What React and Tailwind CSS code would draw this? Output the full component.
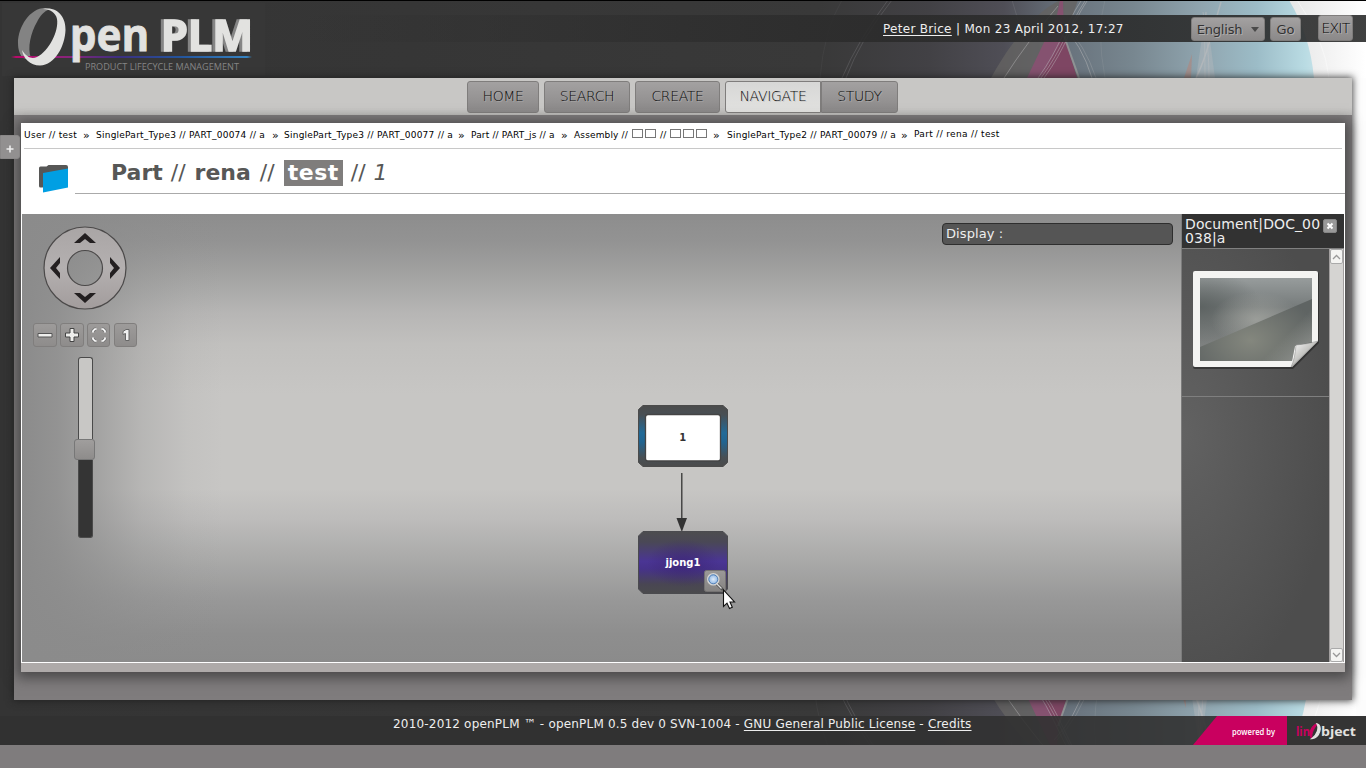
import React from "react";

const SANS = "font-['DejaVu_Sans',sans-serif]";
const BUTTON =
  "flex items-center justify-center rounded-[3px] border border-[#7f7d7c] bg-gradient-to-b from-[#a3a1a1] to-[#8b8989] text-[#333] [text-shadow:1px_1px_0_#b0aeae]";

function Backdrop() {
  return (
    <svg className="absolute left-0 top-0" width="1366" height="745" viewBox="0 0 1366 745" aria-hidden="true">
      <defs>
        <linearGradient id="sky" gradientUnits="userSpaceOnUse" x1="0" y1="0" x2="1366" y2="0">
          <stop offset="0" stopColor="#343434" />
          <stop offset="0.3" stopColor="#363636" />
          <stop offset="0.6" stopColor="#393939" />
          <stop offset="0.68" stopColor="#424145" />
          <stop offset="0.735" stopColor="#4f4e56" />
          <stop offset="0.78" stopColor="#68727c" />
          <stop offset="0.83" stopColor="#788790" />
          <stop offset="0.88" stopColor="#90a5af" />
          <stop offset="0.92" stopColor="#9cbcc7" />
          <stop offset="0.955" stopColor="#b9dbe3" />
          <stop offset="0.98" stopColor="#dceff3" />
        </linearGradient>
        <linearGradient id="edge" x1="0" y1="0" x2="1" y2="0">
          <stop offset="0" stopColor="#e6e6e6" />
          <stop offset="1" stopColor="#ffffff" />
        </linearGradient>
        <g id="shapes">
          <path d="M991 78 C1005 52 1030 15 1060 0 L1078 0 L1064 40 L1078 78Z" fill="#646362" opacity=".8" />
          <path d="M1027 78 L1057 15 L1060 0 H1063 L1064 40 L1077 78Z" fill="#855270" />
          <path d="M1041 78 L1064 36 L1077 78Z" fill="#7e4663" />
          <path d="M1064 36 L1079 78" stroke="#a0a09e" strokeWidth="2" opacity=".7" />
          <path d="M1196 78 L1206 10 L1215 78Z" fill="#b4b9bc" opacity=".45" />
          <path d="M1184 78 L1192 54 L1191 78Z" fill="#a78c87" opacity=".8" />
          <path d="M1289 0 Q1310 35 1314 78 L1366 78 L1366 0Z" fill="url(#edge)" />
          <g fill="none" stroke="#c0bfc0" strokeWidth=".8" opacity=".55">
            <path d="M1004 78 Q1027 42 1058 6" />
            <path d="M1038 78 C1060 48 1065 25 1081 1" />
            <path d="M1041 78 C1063 48 1069 25 1085 1" />
            <path d="M1044 78 C1066 48 1071 25 1087 1" />
            <path d="M1060 22 Q1082 45 1092 78" />
            <path d="M1063 22 Q1085 45 1096 78" opacity=".6" />
            <path d="M1221 2 C1210 40 1205 60 1196 78" strokeWidth="1.500" />
            <path d="M1203 12 C1207 35 1209 58 1209 78" />
            <path d="M1206 12 C1204 35 1205 58 1205 78" />
            <path d="M1297 0 Q1325 40 1329 78" stroke="#fff" />
            <path d="M1012 0 L1018 20" opacity=".3" />
            <path d="M1105 0 Q1096 30 1105 78" opacity=".3" />
          </g>
          <g fill="none" stroke="#77767a" opacity=".4">
            <path d="M842 78 Q858 40 888 0" />
            <path d="M846 78 Q860 40 892 0" />
            <path d="M820 78 Q824 30 842 0" opacity=".3" />
          </g>
        </g>
        <clipPath id="lower"><rect y="700" width="1366" height="45" /></clipPath>
      </defs>
      <rect width="1366" height="745" fill="url(#sky)" />
      <use href="#shapes" />
      <rect x="1352" y="78" width="14" height="630" fill="#fdfdfd" />
      <g clipPath="url(#lower)">
        <g transform="translate(-6 762) scale(1 -1)">
          <use href="#shapes" />
        </g>
        <rect x="1356" y="700" width="10" height="16" fill="#fcfcfc" />
      </g>
      <rect width="1366" height="1" fill="#000" />
    </svg>
  );
}

function Logo() {
  return (
    <svg width="265" height="76" viewBox="0 0 265 76" className="block shrink-0">
      <defs>
        <linearGradient id="beam" x1="0" y1="0" x2="1" y2="0">
          <stop offset="0" stopColor="#c1086a" />
          <stop offset=".25" stopColor="#86257c" />
          <stop offset=".45" stopColor="#3b2f80" />
          <stop offset=".7" stopColor="#23549c" />
          <stop offset="1" stopColor="#3887c4" />
        </linearGradient>
      </defs>
      <rect x="2" y="3" width="263" height="73" fill="#373737" />
      <path d="M45 8 C30 8 18 27 18 43 C18 50 20 55 23 58 C26 59 29 59 31 58 C27 48 31 32 37 22 C40 16 44 11 50 9Z" fill="#838383" />
      <path d="M11 57L16 56H247L252 57L247 58H16Z" fill="url(#beam)" />
      <path d="M43 9 C58 6 66 18 65.500 30 C65 46 55 65 40 65.500 C30 65.500 23 58 22 50 C27 58 32 59 37 57 C49 51 59 31 57 19 C56 13 50 9 43 9Z" fill="#e2e2e0" />
      <g fontFamily="Noto Sans, Open Sans, sans-serif" fontWeight="700" fill="#e2e2e0" stroke="#e2e2e0">
        <text x="70" y="51" fontSize="45" textLength="79" lengthAdjust="spacingAndGlyphs" strokeWidth=".8">pen</text>
        <text className="drop-shadow-[-3px_0_0_#858585]" x="161" y="50.500" fontSize="43" textLength="92" lengthAdjust="spacingAndGlyphs" strokeWidth="1.600">PLM</text>
      </g>
      <text x="85" y="69.500" fontFamily="Open Sans, sans-serif" fontSize="9.500" textLength="154" lengthAdjust="spacingAndGlyphs" fill="#858585">PRODUCT LIFECYCLE MANAGEMENT</text>
    </svg>
  );
}

function Header() {
  return (
    <header className="relative flex h-[78px] shrink-0 items-start pt-[15px]">
      <div className="flex h-[27px] w-full items-start bg-[linear-gradient(90deg,#2c2c2c00_22%,#2e2e2ecc_50%,#2b2b2be6_65%,#2b2c2ce6)]">
        <div className="-mt-[15px] flex h-[27px] w-[883px] shrink-0 items-start">
          <Logo />
        </div>
        <p className="w-[308px] shrink-0 whitespace-nowrap pt-px text-[12px] leading-[27px] tracking-[0.3px] text-[#eee]">
          <a className="underline underline-offset-2">Peter Brice</a> | Mon 23 April 2012, 17:27
        </p>
        <div className={BUTTON + " mt-[2px] h-[24px] w-[74px] shrink-0 gap-[9px] pt-px text-[13px] tracking-[-0.2px]"}>
          English
          <svg width="8" height="5" viewBox="0 0 8 5"><path d="M0 0H8L4 5Z" fill="#4a4a4a" /></svg>
        </div>
        <div className={BUTTON + " ml-[5px] mt-[2px] h-[24px] w-[31px] shrink-0 pt-px text-[13px]"}>Go</div>
        <div className={BUTTON + " ml-[17px] h-[26px] w-[35px] shrink-0 text-[14px] tracking-[-0.8px] font-extralight text-black"}>EXIT</div>
      </div>
    </header>
  );
}

function Menu() {
  const tab = "flex items-center justify-center rounded-[3px] border border-[#7f7d7c] bg-gradient-to-b from-[#a3a1a1] to-[#8b8989] text-[#0c0c0c] [text-shadow:1px_1px_0_#aaa8a8] h-[32px] text-[14px] pb-px font-extralight tracking-[-0.35px]";
  return (
    <nav className="flex h-[37px] shrink-0 bg-[linear-gradient(#c8c7c5_80%,#bcbbb9)] pl-[453px] pt-[3px]">
      <a className={tab + " w-[72px]"}>HOME</a>
      <a className={tab + " ml-[5px] w-[86px]"}>SEARCH</a>
      <a className={tab + " ml-[5px] w-[85px]"}>CREATE</a>
      <a className="ml-[5px] flex h-[32px] w-[96px] items-center justify-center rounded-l-[3px] border border-[#7f7d7c] bg-gradient-to-b from-[#d7d7d6] to-[#e2e2e0] pb-px text-[14px] font-extralight tracking-[-0.3px] text-[#0c0c0c] [text-shadow:1px_1px_0_#c8c8c8]">NAVIGATE</a>
      <a className={tab + " w-[77px] rounded-l-none"}>STUDY</a>
    </nav>
  );
}

const Tofu = () => <span className="mr-[2px] inline-block h-[9px] w-[11px] border border-[#777]" />;

function Crumbs() {
  const sep = "shrink-0 text-[11px]";
  return (
    <div className="mx-[3px] flex h-[26px] shrink-0 whitespace-nowrap border-b border-[#c8c8c8] pt-px text-[9px] leading-[23px] tracking-[0.24px] text-black">
      <span className="w-[59px] shrink-0 tracking-[0.3px]">User // test</span>
      <span className={sep + " w-[13px]"}>»</span>
      <span className="w-[176px] shrink-0">SinglePart_Type3 // PART_00074 // a</span>
      <span className={sep + " w-[12px]"}>»</span>
      <span className="w-[174px] shrink-0">SinglePart_Type3 // PART_00077 // a</span>
      <span className={sep + " w-[13px]"}>»</span>
      <span className="w-[90px] shrink-0 tracking-[0.15px]">Part // PART_js // a</span>
      <span className={sep + " w-[13px]"}>»</span>
      <span className="flex w-[139px] shrink-0">
        <span className="w-[58px] tracking-[0.15px]">Assembly //</span>
        <span className="flex w-[28px] pt-[5px]"><Tofu /><Tofu /></span>
        <span className="w-[10px]">//</span>
        <span className="flex pt-[5px]"><Tofu /><Tofu /><Tofu /></span>
      </span>
      <span className={sep + " w-[14px]"}>»</span>
      <span className="w-[174px] shrink-0">SinglePart_Type2 // PART_00079 // a</span>
      <span className={sep + " w-[13px]"}>»</span>
      <span className="leading-[21px] tracking-[0.34px]">Part // rena // test</span>
    </div>
  );
}

function Title() {
  return (
    <div className="flex h-[65px] shrink-0">
      <svg className="ml-[17px] mt-[15px] shrink-0" width="32" height="30" viewBox="0 0 32 30">
        <path d="M1 4Q1 2.500 2.500 2.500H8.500L10.500 1H28Q30 1 30 3V20L4 23.500H2.500Q1 23.500 1 22Z" fill="#575756" />
        <path d="M5 9L30 4.500V23.500L5 28.500Z" fill="#009fe3" />
      </svg>
      <div className="ml-[5px] flex h-[45px] grow border-b border-[#aaa]">
        <h1 className="ml-[36px] flex items-start whitespace-nowrap pt-[11px] text-[22px] leading-[26px] text-[#575756]">
          <span className="font-bold">Part</span><span className="ml-[8px]">//</span>
          <span className="ml-[9px] font-bold">rena</span><span className="ml-[9px]">//</span>
          <span className="ml-[9px] bg-[#7f7d7c] px-[4px] font-bold tracking-[0.5px] text-white">test</span>
          <span className="ml-[8px]">//</span><span className="ml-[8px] italic">1</span>
        </h1>
      </div>
    </div>
  );
}

const TOOL = "flex h-[24px] items-center justify-center rounded-[3px] border border-[#807e7d] bg-gradient-to-b from-[#9d9b9a] to-[#8e8c8b]";

function Controls() {
  return (
    <div className="flex w-[120px] shrink-0 flex-col pt-[12px]">
      <svg className="ml-[21px]" width="84" height="84" viewBox="0 0 84 84">
        <defs>
          <linearGradient id="ring" x1="0" y1="0" x2="0" y2="1">
            <stop offset="0" stopColor="#a9a5a5" />
            <stop offset=".5" stopColor="#b4b0b0" />
            <stop offset="1" stopColor="#a29c9c" />
          </linearGradient>
        </defs>
        <path fillRule="evenodd" d="M42 1a41 41 0 1 0 0 82a41 41 0 1 0 0-82zM42 24.500a17.500 17.500 0 1 1 0 35a17.500 17.500 0 1 1 0-35z" fill="url(#ring)" stroke="#4b4949" strokeWidth="1.200" />
        <g fill="#231f20">
          <path d="M42 7L53 17H47L42 13L37 17H31Z" />
          <path d="M42 77L53 67H47L42 71L37 67H31Z" />
          <path d="M7 42L17 31V37L13 42L17 47V53Z" />
          <path d="M77 42L67 31V37L71 42L67 47V53Z" />
        </g>
      </svg>
      <div className="ml-[11px] mt-[13px] flex gap-[3px]">
        <div className={TOOL + " w-[24px]"}>
          <svg width="18" height="18" viewBox="0 0 18 18"><path d="M2 7.500h14v3.500H2z" fill="#eeeeec" stroke="#555" /></svg>
        </div>
        <div className={TOOL + " w-[24px]"}>
          <svg width="18" height="18" viewBox="0 0 18 18"><path d="M7 2.500h4v4.500h4.500v4H11v4.500H7V11H2.500V7H7z" fill="#eeeeec" stroke="#444" /></svg>
        </div>
        <div className={TOOL + " w-[23px]"}>
          <svg width="18" height="18" viewBox="0 0 18 18" fill="none">
            <g stroke="#777" strokeWidth="3.200"><path d="M3 6V5L5 3H6M12 3H13L15 5V6M15 12V13L13 15H12M6 15H5L3 13V12" /></g>
            <g stroke="#fff" strokeWidth="1.700"><path d="M3 6.500V5L5 3H6.500M11.500 3H13L15 5V6.500M15 11.500V13L13 15H11.500M6.500 15H5L3 13V11.500" /></g>
          </svg>
        </div>
        <div className={TOOL + " ml-px w-[23px]"}>
          <svg width="18" height="18" viewBox="0 0 18 18"><path d="M6 5.500L9 3.500H12V14.500H8.500V7.500L6 8.500Z" fill="#f0f0f0" stroke="#666" /></svg>
        </div>
      </div>
      <div className="ml-[52px] mt-[10px] flex w-[22px] flex-col items-end">
        <div className="mr-[3px] h-[82px] w-[15px] rounded-t-[3px] border border-b-0 border-[#4a4a4a] bg-[#c8c7c5]" />
        <div className="mr-px h-[21px] w-[21px] rounded-[3px] border border-[#777] bg-gradient-to-b from-[#a09e9d] to-[#8e8c8b]" />
        <div className="mr-[3px] h-[78px] w-[15px] rounded-b-[3px] border border-t-0 border-[#4a4a4a] bg-[#343434]" />
      </div>
    </div>
  );
}

function Graph() {
  return (
    <svg className="absolute left-[610px] top-[186px]" width="110" height="214" viewBox="632 400 110 214">
      <defs>
        <linearGradient id="blueV" x1="0" y1="0" x2="0" y2="1">
          <stop offset="0" stopColor="#4b4b4b" /><stop offset=".15" stopColor="#484f54" /><stop offset=".45" stopColor="#216a98" /><stop offset=".6" stopColor="#216490" /><stop offset=".85" stopColor="#484f54" /><stop offset="1" stopColor="#4b4b4b" />
        </linearGradient>
        <linearGradient id="violetV" x1="0" y1="0" x2="0" y2="1">
          <stop offset="0" stopColor="#4d4d4f" /><stop offset=".17" stopColor="#4a4856" /><stop offset=".48" stopColor="#4a3594" /><stop offset=".6" stopColor="#46328a" /><stop offset=".85" stopColor="#494653" /><stop offset="1" stopColor="#4b4b4d" />
        </linearGradient>
        <radialGradient id="violetC"><stop offset="0" stopColor="#38206f" stopOpacity=".6" /><stop offset="1" stopColor="#38206f" stopOpacity="0" /></radialGradient>
        <linearGradient id="zoomBtn" x1="0" y1="0" x2="0" y2="1"><stop offset="0" stopColor="#9b9998" /><stop offset="1" stopColor="#858382" /></linearGradient>
        <radialGradient id="lens"><stop offset="0" stopColor="#e0ecfa" /><stop offset="1" stopColor="#82aee0" /></radialGradient>
      </defs>
      <path d="M643 405.500H723L727.500 409.500V462.500L723 466.500H643L638.500 462.500V409.500Z" fill="url(#blueV)" stroke="#4b4b4b" strokeLinejoin="round" />
      <rect x="645.500" y="414.500" width="75" height="46.500" rx="2.500" fill="#fff" stroke="#444" strokeWidth="1.300" />
      <text x="682.800" y="441" textAnchor="middle" fontFamily="DejaVu Sans, sans-serif" fontWeight="700" fontSize="10" fill="#333">1</text>
      <path d="M681.800 473V519" stroke="#333" strokeWidth="1.300" />
      <path d="M676.500 518H687L681.800 532Z" fill="#333" />
      <path d="M643 531.500H723L727.500 536V589L723 593.500H643L638.500 589V536Z" fill="url(#violetV)" stroke="#4b4b4f" strokeLinejoin="round" />
      <ellipse cx="683" cy="563" rx="36" ry="24" fill="url(#violetC)" />
      <text x="683" y="566" textAnchor="middle" fontFamily="DejaVu Sans, sans-serif" fontWeight="700" fontSize="10" fill="#fff">jjong1</text>
      <rect x="704.500" y="570.500" width="21" height="21" rx="2" fill="url(#zoomBtn)" stroke="#757373" />
      <path d="M717 584L722 589" stroke="#555" strokeWidth="3" strokeLinecap="round" />
      <path d="M717 584L721.500 588.500" stroke="#ddd" strokeWidth="1.200" />
      <circle cx="713.300" cy="579.300" r="5.500" fill="url(#lens)" stroke="#d4d4d4" strokeWidth="1.600" />
      <circle cx="713.300" cy="579.300" r="4.500" fill="none" stroke="#4878b0" strokeWidth=".9" />
      <path d="M723.500 590V606.500L727 603.200L729.500 608.500L732.300 607.200L730 602H734.500Z" fill="#fff" stroke="#111" strokeWidth="1.100" />
    </svg>
  );
}

function DocumentPanel() {
  return (
    <aside className="flex h-[448px] w-[163px] shrink-0 flex-col border-l border-[#7c7c7c] bg-[#525252]">
      <div className="flex h-[35px] shrink-0 border-b border-[#808080] bg-[#323232] pl-[3px] text-[14px] leading-[14px] text-[#eee]">
        <p className="w-[138px] shrink-0 pt-[3px] tracking-[0.1px]">Document|DOC_00<br />038|a</p>
        <div className="mt-[5px] flex h-[14px] w-[14px] items-center justify-center rounded-[2px] border border-[#858585] bg-[#999]">
          <svg width="8" height="8" viewBox="0 0 8 8"><path d="M1.500 1.500L6.500 6.500M6.500 1.500L1.500 6.500" stroke="#fff" strokeWidth="2" /></svg>
        </div>
      </div>
      <div className="flex grow">
        <div className="flex w-[147px] flex-col bg-[radial-gradient(ellipse_150px_270px_at_0%_45%,#626262,#4d4d4d)]">
          <div className="flex h-[148px] border-b border-[#7f7f7f] pl-[9px] pt-[19px]">
            <svg width="130" height="104" viewBox="0 0 130 104">
              <defs>
                <radialGradient id="glow" cx=".45" cy=".75" r=".6"><stop offset="0" stopColor="#84877e" /><stop offset="1" stopColor="#5f6463" /></radialGradient>
                <linearGradient id="pic" x1="0" y1="0" x2="0" y2="1">
                  <stop offset="0" stopColor="#979c9c" /><stop offset=".42" stopColor="#767b7b" /><stop offset=".55" stopColor="#7c807f" /><stop offset="1" stopColor="#7e8180" />
                </linearGradient>
                <radialGradient id="shade" cx="0" cy=".42" r=".55"><stop offset="0" stopColor="#575d5c" stopOpacity=".8" /><stop offset="1" stopColor="#575d5c" stopOpacity="0" /></radialGradient>
                <radialGradient id="shine" cx=".5" cy=".6" r=".4"><stop offset="0" stopColor="#a5a7a2" stopOpacity=".75" /><stop offset="1" stopColor="#a5a7a2" stopOpacity="0" /></radialGradient>
                <linearGradient id="fold" x1="1" y1="1" x2=".5" y2=".5"><stop offset="0" stopColor="#b4b6b1" stopOpacity=".7" /><stop offset="1" stopColor="#a8aaa5" stopOpacity="0" /></linearGradient>
                <linearGradient id="curl" x1="0" y1="0" x2="1" y2="1"><stop offset="0" stopColor="#fff" /><stop offset=".6" stopColor="#b4b4b0" /><stop offset="1" stopColor="#eee" /></linearGradient>
              </defs>
              <path d="M4 4H126Q128 4 128 6V75L102 101H4Q2 101 2 99V6Q2 4 4 4Z" fill="#222" opacity=".6" />
              <path d="M4 3H125Q127 3 127 5V73L101 99H4Q2 99 2 97V5Q2 3 4 3Z" fill="#f4f4f2" />
              <path d="M9 10H121V75L104 78L101 93H9Z" fill="url(#glow)" />
              <path d="M9 10H121V31L9 79Z" fill="url(#pic)" />
              <path d="M9 10H121V31L9 79Z" fill="url(#shade)" />
              <path d="M9 10H121V31L9 79Z" fill="url(#shine)" />
              <path d="M121 40V74L104 78L101 93H70Z" fill="url(#fold)" />
              <path d="M127 73Q118 76 105 77Q104 91 100 99Z" fill="url(#curl)" stroke="#888" strokeWidth=".5" />
            </svg>
          </div>
        </div>
        <div className="flex w-[15px] flex-col justify-between border-x border-[#a29f9f] bg-[#d5d4d2]">
          <div className="flex h-[15px] items-center justify-center rounded-[2px] border border-[#aaa] bg-[#f4f4f2]">
            <svg width="9" height="6" viewBox="0 0 9 6"><path d="M1 5L4.500 1.500L8 5" fill="none" stroke="#999" strokeWidth="1.300" /></svg>
          </div>
          <div className="flex h-[14px] items-center justify-center rounded-[2px] border border-[#aaa] bg-[#f4f4f2]">
            <svg width="9" height="6" viewBox="0 0 9 6"><path d="M1 1L4.500 4.500L8 1" fill="none" stroke="#999" strokeWidth="1.300" /></svg>
          </div>
        </div>
      </div>
    </aside>
  );
}

function Footer() {
  return (
    <footer className="relative mt-[16px] flex h-[29px] shrink-0 bg-[#313131]/90 text-[#eee]">
      <p className="w-[793px] shrink-0 whitespace-nowrap pl-[393px] text-[12px] leading-[16px] tracking-[0.19px]">
        2010-2012 openPLM ™ - openPLM 0.5 dev 0 SVN-1004 - <a className="underline underline-offset-2">GNU General Public License</a> - <a className="underline underline-offset-2">Credits</a>
      </p>
      <svg className="ml-auto shrink-0" width="175" height="29" viewBox="0 0 175 29">
        <path d="M26 0H96V29H2Z" fill="#c9005f" />
        <rect x="96" width="79" height="29" fill="#343434" />
        <g fontFamily="Open Sans, Noto Sans, sans-serif">
          <text x="41" y="19" fontSize="9" fontWeight="600" textLength="43" lengthAdjust="spacingAndGlyphs" fill="#fff">powered by</text>
          <text x="105" y="20" fontSize="13" fontWeight="700" textLength="14" lengthAdjust="spacingAndGlyphs" fill="#c9005f">lin</text>
          <text x="130" y="20" fontSize="13" fontWeight="700" textLength="35" lengthAdjust="spacingAndGlyphs" fill="#e2e2e0">bject</text>
        </g>
        <path d="M127 8C121 7 116 19 121 22.500C120 18 123 11 127 8Z" fill="#c9005f" stroke="#c9005f" />
        <path d="M126 8C132 9 129 22 121 22.500C126 19 128.500 12 126 8Z" fill="#e2e2e0" stroke="#e2e2e0" strokeWidth="1.300" />
      </svg>
    </footer>
  );
}

export default function App() {
  return (
    <div className={SANS + " relative flex h-[768px] w-[1366px] flex-col overflow-hidden bg-[#7f7c7d]"}>
      <Backdrop />
      <Header />
      <main className="relative mx-[14px] flex h-[622px] shrink-0 flex-col bg-[#7f7c7d] shadow-[0_0_7px_1px_rgba(30,30,30,0.8)]">
        <Menu />
        <section className="ml-[7px] mt-[8px] flex h-[549px] w-[1324px] shrink-0 flex-col bg-white shadow-[0_2px_12px_4px_rgba(50,50,50,0.7)]">
          <Crumbs />
          <Title />
          <div className="relative ml-px flex h-[448px] w-[1322px] shrink-0 justify-between bg-[linear-gradient(90deg,#8b8b8b_0px,#8b8b8bdd_35px,#8b8b8b99_75px,#8b8b8b44_120px,#8b8b8b11_165px,#8b8b8b00_200px),linear-gradient(#8d8d8d_0px,#939393_28px,#a2a2a1_60px,#b7b6b5_100px,#c1c0be_130px,#c7c6c4_180px,#c7c6c4_275px,#bdbcbb_305px,#aaaaa9_345px,#989898_385px,#8e8e8e_420px,#8b8b8b_448px)]">
            <Controls />
            <Graph />
            <div className="flex">
              <div className="mr-[8px] mt-[9px] h-[22px] w-[231px] rounded-[4px] border border-[#2e2e2e] bg-[#555] pl-[3px] text-[13px] leading-[20px] tracking-[0.1px] text-[#eee]">Display :</div>
              <DocumentPanel />
            </div>
          </div>
          <div className="mt-px h-[9px] shrink-0 bg-[#aeaaa9]" />
        </section>
        <button className="absolute left-[-14px] top-[57px] flex h-[24px] w-[20px] items-center justify-center rounded-r-[3px] border border-[#8a8888] bg-[#929090]">
          <svg className="mt-[3px]" width="8" height="8" viewBox="0 0 8 8"><path d="M4 .5V7.500M.5 4H7.500" stroke="#eee" strokeWidth="1.600" /></svg>
        </button>
      </main>
      <Footer />
    </div>
  );
}
